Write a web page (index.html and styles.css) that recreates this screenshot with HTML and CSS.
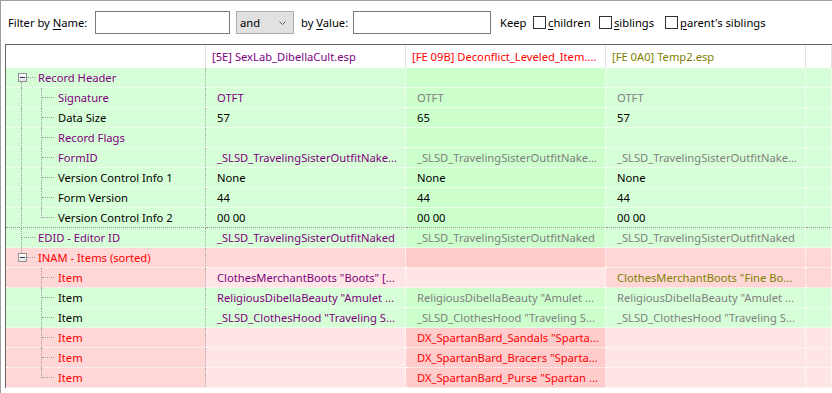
FILE: index.html
```html
<!DOCTYPE html>
<html>
<head>
<meta charset="utf-8">
<title>xEdit</title>
<link rel="stylesheet" href="styles.css">
</head>
<body>
<div class="frame">
  <div class="toolbar">
    <span class="lbl-name">Filter by <u>N</u>ame:</span>
    <span class="input in-name"></span>
    <span class="select"><span class="sel-text">and</span><svg class="chev" width="7" height="4" viewBox="0 0 7 4"><polyline points="0.5,0.5 3.5,3.5 6.5,0.5" fill="none" stroke="#606060" stroke-width="1"/></svg></span>
    <span class="lbl-value">by <u>V</u>alue:</span>
    <span class="input in-value"></span>
    <span class="lbl-keep">Keep</span>
    <span class="chk-group g1"><span class="cb"></span><span class="cb-lbl"><u>c</u>hildren</span></span>
    <span class="chk-group g2"><span class="cb"></span><span class="cb-lbl"><u>s</u>iblings</span></span>
    <span class="chk-group g3"><span class="cb"></span><span class="cb-lbl"><u>p</u>arent's siblings</span></span>
  </div>

  <div class="tree">
    <div class="row hdr">
      <div class="c"></div>
      <div class="c t-purple">[5E] SexLab_DibellaCult.esp</div>
      <div class="c t-red">[FE 09B] Deconflict_Leveled_Item....</div>
      <div class="c t-olive">[FE 0A0] Temp2.esp</div>
      <div class="c"></div>
    </div>

    <div class="row g">
      <div class="c tc"><span class="ind vb hb"><span class="box"><span class="minus"></span></span></span><span class="nm t-purple">Record Header</span></div>
      <div class="c"></div><div class="c dk"></div><div class="c"></div><div class="c"></div>
    </div>
    <div class="row g">
      <div class="c tc"><span class="ind v"></span><span class="ind v h"></span><span class="nm t-purple">Signature</span></div>
      <div class="c t-purple">OTFT</div><div class="c dk t-gray">OTFT</div><div class="c t-gray">OTFT</div><div class="c"></div>
    </div>
    <div class="row g">
      <div class="c tc"><span class="ind v"></span><span class="ind v h"></span><span class="nm">Data Size</span></div>
      <div class="c">57</div><div class="c dk">65</div><div class="c">57</div><div class="c"></div>
    </div>
    <div class="row g">
      <div class="c tc"><span class="ind v"></span><span class="ind v h"></span><span class="nm t-purple">Record Flags</span></div>
      <div class="c"></div><div class="c dk"></div><div class="c"></div><div class="c"></div>
    </div>
    <div class="row g">
      <div class="c tc"><span class="ind v"></span><span class="ind v h"></span><span class="nm t-purple">FormID</span></div>
      <div class="c t-purple">_SLSD_TravelingSisterOutfitNake...</div><div class="c dk t-gray">_SLSD_TravelingSisterOutfitNake...</div><div class="c t-gray">_SLSD_TravelingSisterOutfitNake...</div><div class="c"></div>
    </div>
    <div class="row g">
      <div class="c tc"><span class="ind v"></span><span class="ind v h"></span><span class="nm">Version Control Info 1</span></div>
      <div class="c">None</div><div class="c dk">None</div><div class="c">None</div><div class="c"></div>
    </div>
    <div class="row g">
      <div class="c tc"><span class="ind v"></span><span class="ind v h"></span><span class="nm">Form Version</span></div>
      <div class="c">44</div><div class="c dk">44</div><div class="c">44</div><div class="c"></div>
    </div>
    <div class="row g sep">
      <div class="c tc"><span class="ind v"></span><span class="ind vt h"></span><span class="nm">Version Control Info 2</span></div>
      <div class="c">00 00</div><div class="c dk">00 00</div><div class="c">00 00</div><div class="c"></div>
    </div>
    <div class="row g">
      <div class="c tc"><span class="ind v h0"></span><span class="nm t-purple">EDID - Editor ID</span></div>
      <div class="c t-purple">_SLSD_TravelingSisterOutfitNaked</div><div class="c dk t-gray">_SLSD_TravelingSisterOutfitNaked</div><div class="c t-gray">_SLSD_TravelingSisterOutfitNaked</div><div class="c"></div>
    </div>

    <div class="row p">
      <div class="c tc"><span class="ind va hb"><span class="box"><span class="minus"></span></span></span><span class="nm t-red">INAM - Items (sorted)</span></div>
      <div class="c"></div><div class="c dp"></div><div class="c"></div><div class="c"></div>
    </div>
    <div class="row p">
      <div class="c tc"><span class="ind"></span><span class="ind v h"></span><span class="nm t-red">Item</span></div>
      <div class="c lp t-purple">ClothesMerchantBoots "Boots" [...</div><div class="c lp"></div><div class="c t-olive">ClothesMerchantBoots "Fine Bo...</div><div class="c"></div>
    </div>
    <div class="row g">
      <div class="c tc"><span class="ind"></span><span class="ind v h"></span><span class="nm">Item</span></div>
      <div class="c t-purple">ReligiousDibellaBeauty "Amulet ...</div><div class="c dk t-gray">ReligiousDibellaBeauty "Amulet ...</div><div class="c t-gray">ReligiousDibellaBeauty "Amulet ...</div><div class="c"></div>
    </div>
    <div class="row g">
      <div class="c tc"><span class="ind"></span><span class="ind v h"></span><span class="nm">Item</span></div>
      <div class="c t-purple">_SLSD_ClothesHood "Traveling S...</div><div class="c dk t-gray">_SLSD_ClothesHood "Traveling S...</div><div class="c t-gray">_SLSD_ClothesHood "Traveling S...</div><div class="c"></div>
    </div>
    <div class="row p">
      <div class="c tc"><span class="ind"></span><span class="ind v h"></span><span class="nm t-red">Item</span></div>
      <div class="c lp"></div><div class="c dp t-red">DX_SpartanBard_Sandals "Sparta...</div><div class="c lp"></div><div class="c lp"></div>
    </div>
    <div class="row p">
      <div class="c tc"><span class="ind"></span><span class="ind v h"></span><span class="nm t-red">Item</span></div>
      <div class="c lp"></div><div class="c dp t-red">DX_SpartanBard_Bracers "Sparta...</div><div class="c lp"></div><div class="c lp"></div>
    </div>
    <div class="row p">
      <div class="c tc"><span class="ind"></span><span class="ind vt h"></span><span class="nm t-red">Item</span></div>
      <div class="c lp"></div><div class="c dp t-red">DX_SpartanBard_Purse "Spartan ...</div><div class="c lp"></div><div class="c lp"></div>
    </div>
  </div>
</div>
</body>
</html>
```

FILE: styles.css
```css
* { box-sizing: border-box; }

body {
  margin: 0;
  font-family: "Segoe UI", "Noto Sans", sans-serif;
  font-size: 11.2px;
  color: #000;
  background: #fff;
  overflow: hidden;
}

u { text-decoration: underline; text-underline-offset: 2px; }

.frame {
  height: 393px;
  border-top: 1px solid #a0a0a0;
  border-left: 1px solid #a0a0a0;
}

/* ---------- toolbar ---------- */
.toolbar {
  height: 43px;
  display: flex;
  align-items: center;
  padding-left: 7px;
  white-space: nowrap;
}

.lbl-name { width: 87px; }

.input {
  height: 23px;
  border: 1px solid #7a7a7a;
  background: #fff;
}
.in-name { width: 135px; }
.in-value { width: 138px; }

.select {
  margin-left: 6px;
  width: 58px;
  height: 23px;
  background: #e1e1e1;
  border: 1px solid #adadad;
  display: flex;
  align-items: center;
  padding-left: 3px;
}
.sel-text { flex: 1; }
.chev { margin-right: 7px; }

.lbl-value { margin-left: 7px; width: 52px; }
.lbl-keep { margin-left: 9px; width: 33px; }

.chk-group { display: flex; align-items: center; }
.g1, .g2 { width: 66px; }
.cb {
  width: 13px;
  height: 13px;
  border: 1px solid #333;
  background: #fff;
  flex: none;
}
.cb-lbl { margin-left: 2px; }

/* ---------- tree ---------- */
.tree {
  margin-left: 4px;
  border-top: 1px solid #646464;
  border-left: 1px solid #646464;
}

.row {
  display: grid;
  grid-template-columns: 200px 200px 200px 200px 1fr;
  height: 20px;
}

.c {
  height: 20px;
  line-height: 19px;
  padding-left: 11px;
  white-space: nowrap;
  overflow: hidden;
  border-bottom: 1px dotted #fff;
  border-right: 1px dotted #fff;
}
.row .c:first-child { border-right-color: #a8a8a8; }

.row.hdr { height: 23px; }
.row.hdr .c {
  height: 23px;
  line-height: 23px;
  padding-left: 6px;
  border-bottom: none;
  border-right: 1px solid #e3e3e3;
  background: #fff;
}

.row.g .c { background: #d7ffd7; }
.row.g .c.dk { background: #ccffcc; }
.row.p .c { background: #ffd7d7; }
.row.p .c.lp { background: #ffe5e5; }
.row.p .c.dp { background: #ffcccc; }

.row.sep .c { border-bottom-color: #9a9a9a; }

.t-purple { color: #800080; }
.t-red { color: #ff0000; }
.t-gray { color: #808080; }
.t-olive { color: #808000; }

/* tree cell */
.c.tc {
  display: flex;
  padding-left: 6px;
  overflow: visible;
}
.nm { margin-left: 6px; }

.ind {
  position: relative;
  width: 20px;
  flex: none;
  height: 19px;
}
.ind::before,
.ind::after { content: none; position: absolute; }

.ind.v::before {
  content: "";
  left: 9px; top: 0; bottom: -1px;
  border-left: 1px dotted #a0a0a0;
}
.ind.vt::before {
  content: "";
  left: 9px; top: 0; height: 10px;
  border-left: 1px dotted #a0a0a0;
}
.ind.vb::before {
  content: "";
  left: 9px; top: 14px; bottom: -1px;
  border-left: 1px dotted #a0a0a0;
}
.ind.va::before {
  content: "";
  left: 9px; top: 0; height: 5px;
  border-left: 1px dotted #a0a0a0;
}
.ind.h::after {
  content: "";
  left: 10px; top: 9px; width: 12px;
  border-top: 1px dotted #a0a0a0;
}
.ind.h0::after {
  content: "";
  left: 10px; top: 9px; width: 13px;
  border-top: 1px dotted #a0a0a0;
}
.ind.hb::after {
  content: "";
  left: 15px; top: 9px; width: 8px;
  border-top: 1px dotted #a0a0a0;
}

.box {
  position: absolute;
  left: 6px;
  top: 5px;
  width: 9px;
  height: 9px;
  border: 1px solid #919191;
  background: linear-gradient(#ffffff, #e4e4e4);
  display: flex;
  align-items: center;
  justify-content: center;
}
.minus {
  width: 5px;
  height: 1px;
  background: #2b3f66;
}
```
